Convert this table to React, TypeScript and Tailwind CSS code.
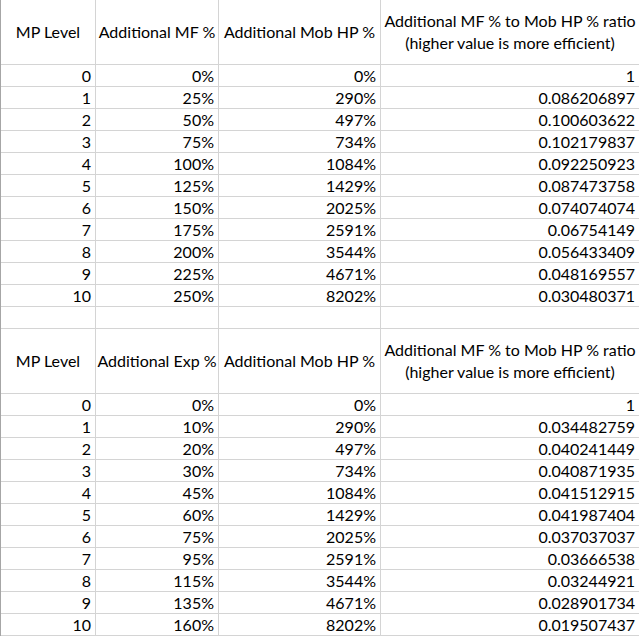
import React from "react";

const t1 = [
  ["0", "0%", "0%", "1"],
  ["1", "25%", "290%", "0.086206897"],
  ["2", "50%", "497%", "0.100603622"],
  ["3", "75%", "734%", "0.102179837"],
  ["4", "100%", "1084%", "0.092250923"],
  ["5", "125%", "1429%", "0.087473758"],
  ["6", "150%", "2025%", "0.074074074"],
  ["7", "175%", "2591%", "0.06754149"],
  ["8", "200%", "3544%", "0.056433409"],
  ["9", "225%", "4671%", "0.048169557"],
  ["10", "250%", "8202%", "0.030480371"],
];
const t2 = [
  ["0", "0%", "0%", "1"],
  ["1", "10%", "290%", "0.034482759"],
  ["2", "20%", "497%", "0.040241449"],
  ["3", "30%", "734%", "0.040871935"],
  ["4", "45%", "1084%", "0.041512915"],
  ["5", "60%", "1429%", "0.041987404"],
  ["6", "75%", "2025%", "0.037037037"],
  ["7", "95%", "2591%", "0.03666538"],
  ["8", "115%", "3544%", "0.03244921"],
  ["9", "135%", "4671%", "0.028901734"],
  ["10", "160%", "8202%", "0.019507437"],
];

const cell = "border-b border-r border-[#d4d4d4] box-border";

function Header({ second }: { second: string }) {
  return (
    <>
      <div className={`${cell} h-[65px] flex items-center justify-center`}>MP Level</div>
      <div className={`${cell} h-[65px] flex items-center justify-center whitespace-nowrap`}>{second}</div>
      <div className={`${cell} h-[65px] flex items-center justify-center whitespace-nowrap`}>Additional Mob HP %</div>
      <div className="border-b border-[#d4d4d4] h-[65px] flex flex-col items-center justify-center leading-[22px] whitespace-nowrap">
        <span>Additional MF % to Mob HP % ratio</span>
        <span>(higher value is more efficient)</span>
      </div>
    </>
  );
}

function Rows({ rows }: { rows: string[][] }) {
  return (
    <>
      {rows.map((r, i) => (
        <React.Fragment key={i}>
          <div className={`${cell} h-[22px] flex items-center justify-end pr-[4px]`}>{r[0]}</div>
          <div className={`${cell} h-[22px] flex items-center justify-end pr-[4px]`}>{r[1]}</div>
          <div className={`${cell} h-[22px] flex items-center justify-end pr-[4px]`}>{r[2]}</div>
          <div className="border-b border-[#d4d4d4] h-[22px] flex items-center justify-end pr-[4px]">{r[3]}</div>
        </React.Fragment>
      ))}
    </>
  );
}

export default function App() {
  return (
    <div
      className="w-[639px] h-[637px] bg-white text-black text-[16px] overflow-hidden"
      style={{ fontFamily: "Lato, 'Open Sans', sans-serif" }}
    >
      <div className="border-l border-[#a6a6a6] grid grid-cols-[95px_123px_162px_1fr]">
        <Header second="Additional MF %" />
        <Rows rows={t1} />
        <div className={`${cell} h-[22px]`} />
        <div className={`${cell} h-[22px]`} />
        <div className={`${cell} h-[22px]`} />
        <div className="border-b border-[#d4d4d4] h-[22px]" />
        <Header second="Additional Exp %" />
        <Rows rows={t2} />
      </div>
    </div>
  );
}
